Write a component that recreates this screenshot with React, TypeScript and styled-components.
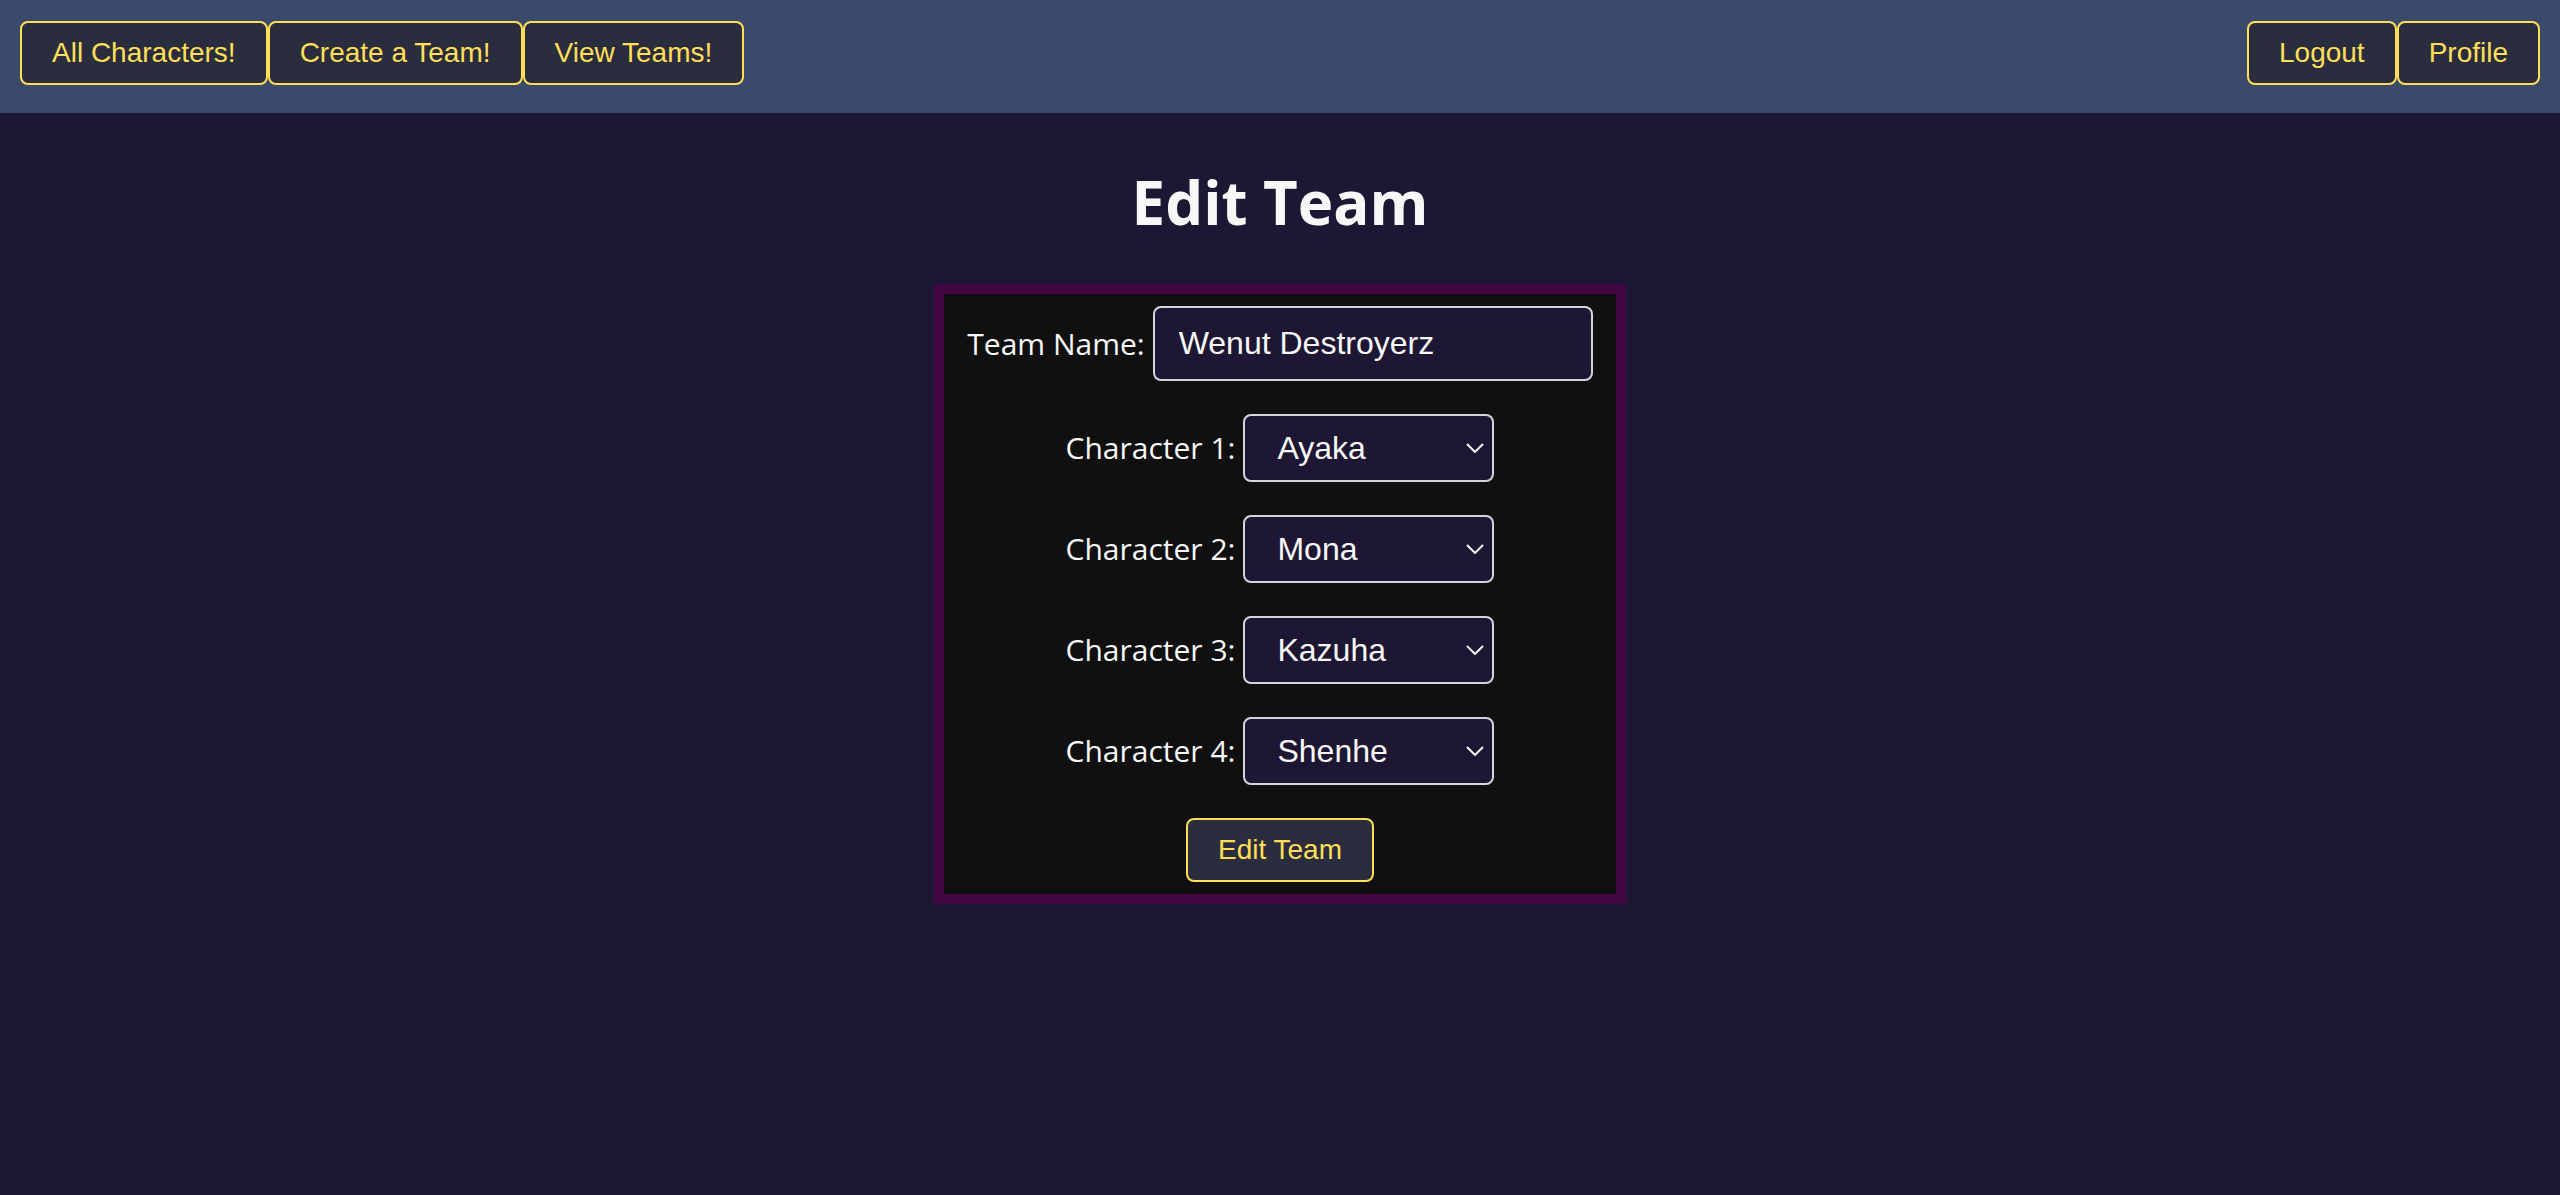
import { useState } from "react";
import styled, { createGlobalStyle } from "styled-components";

const GlobalStyle = createGlobalStyle`
  *, *::before, *::after {
    box-sizing: border-box;
  }
  body {
    margin: 0;
    background: #1e1734;
    color: #f7f7f7;
    font-family: "Segoe UI", "Open Sans", sans-serif;
  }
`;

const controlFont = `"Liberation Sans", Arial, sans-serif`;

const NavBar = styled.nav`
  display: flex;
  justify-content: space-between;
  padding: 21px 20px 28px;
  background: #3b4a6a;
`;

const NavGroup = styled.div`
  display: flex;
`;

const Button = styled.button`
  padding: 14px 30px;
  border: 2px solid #ffdf57;
  border-radius: 8px;
  background: #2a2d3e;
  color: #ffdf57;
  font-family: ${controlFont};
  font-size: 28px;
  line-height: 32px;
  cursor: pointer;
`;

const Main = styled.main`
  display: flex;
  flex-direction: column;
  align-items: center;
  padding: 46px 20px;
`;

const Title = styled.h1`
  margin: 0 0 39px;
  font-size: 60px;
  font-weight: 700;
  line-height: 86px;
`;

const TeamForm = styled.form`
  display: flex;
  flex-direction: column;
  align-items: center;
  gap: 33px;
  padding: 12px 23px;
  border: 10px solid #420743;
  border-radius: 2px;
  background: #101010;
`;

const Field = styled.div`
  display: flex;
  align-items: center;
  gap: 8px;
`;

const Label = styled.label`
  font-size: 30px;
  line-height: 42px;
`;

const TextInput = styled.input`
  width: 440px;
  height: 75px;
  padding: 0 24px;
  border: 2px solid #d3d5dc;
  border-radius: 8px;
  background: #1e1734;
  color: #f7f7f7;
  font-family: ${controlFont};
  font-size: 32px;
`;

const SelectBox = styled.div`
  display: grid;
  align-items: center;
`;

const Select = styled.select`
  grid-area: 1 / 1;
  width: 251px;
  height: 68px;
  padding: 0 32px;
  border: 2px solid #d3d5dc;
  border-radius: 8px;
  appearance: none;
  background: #1e1734;
  color: #f7f7f7;
  font-family: ${controlFont};
  font-size: 32px;
`;

const Chevron = styled.svg`
  grid-area: 1 / 1;
  justify-self: end;
  width: 18px;
  height: 10px;
  margin-right: 10px;
  fill: none;
  stroke: #f7f7f7;
  stroke-width: 2;
  pointer-events: none;
`;

const characters = ["Ayaka", "Mona", "Kazuha", "Shenhe"];

export default function App() {
  const [name, setName] = useState("Wenut Destroyerz");
  const [team, setTeam] = useState(characters);

  return (
    <>
      <GlobalStyle />
      <NavBar>
        <NavGroup>
          <Button type="button">All Characters!</Button>
          <Button type="button">Create a Team!</Button>
          <Button type="button">View Teams!</Button>
        </NavGroup>
        <NavGroup>
          <Button type="button">Logout</Button>
          <Button type="button">Profile</Button>
        </NavGroup>
      </NavBar>
      <Main>
        <Title>Edit Team</Title>
        <TeamForm onSubmit={(event) => event.preventDefault()}>
          <Field>
            <Label htmlFor="team-name">Team Name:</Label>
            <TextInput
              id="team-name"
              type="text"
              value={name}
              onChange={(event) => setName(event.target.value)}
            />
          </Field>
          {team.map((member, index) => (
            <Field key={index}>
              <Label htmlFor={`character-${index + 1}`}>
                Character {index + 1}:
              </Label>
              <SelectBox>
                <Select
                  id={`character-${index + 1}`}
                  value={member}
                  onChange={(event) =>
                    setTeam(team.map((m, i) => (i === index ? event.target.value : m)))
                  }
                >
                  {characters.map((character) => (
                    <option key={character}>{character}</option>
                  ))}
                </Select>
                <Chevron viewBox="0 0 18 10" aria-hidden="true">
                  <path d="M1 1L9 9L17 1" />
                </Chevron>
              </SelectBox>
            </Field>
          ))}
          <Button type="submit">Edit Team</Button>
        </TeamForm>
      </Main>
    </>
  );
}
